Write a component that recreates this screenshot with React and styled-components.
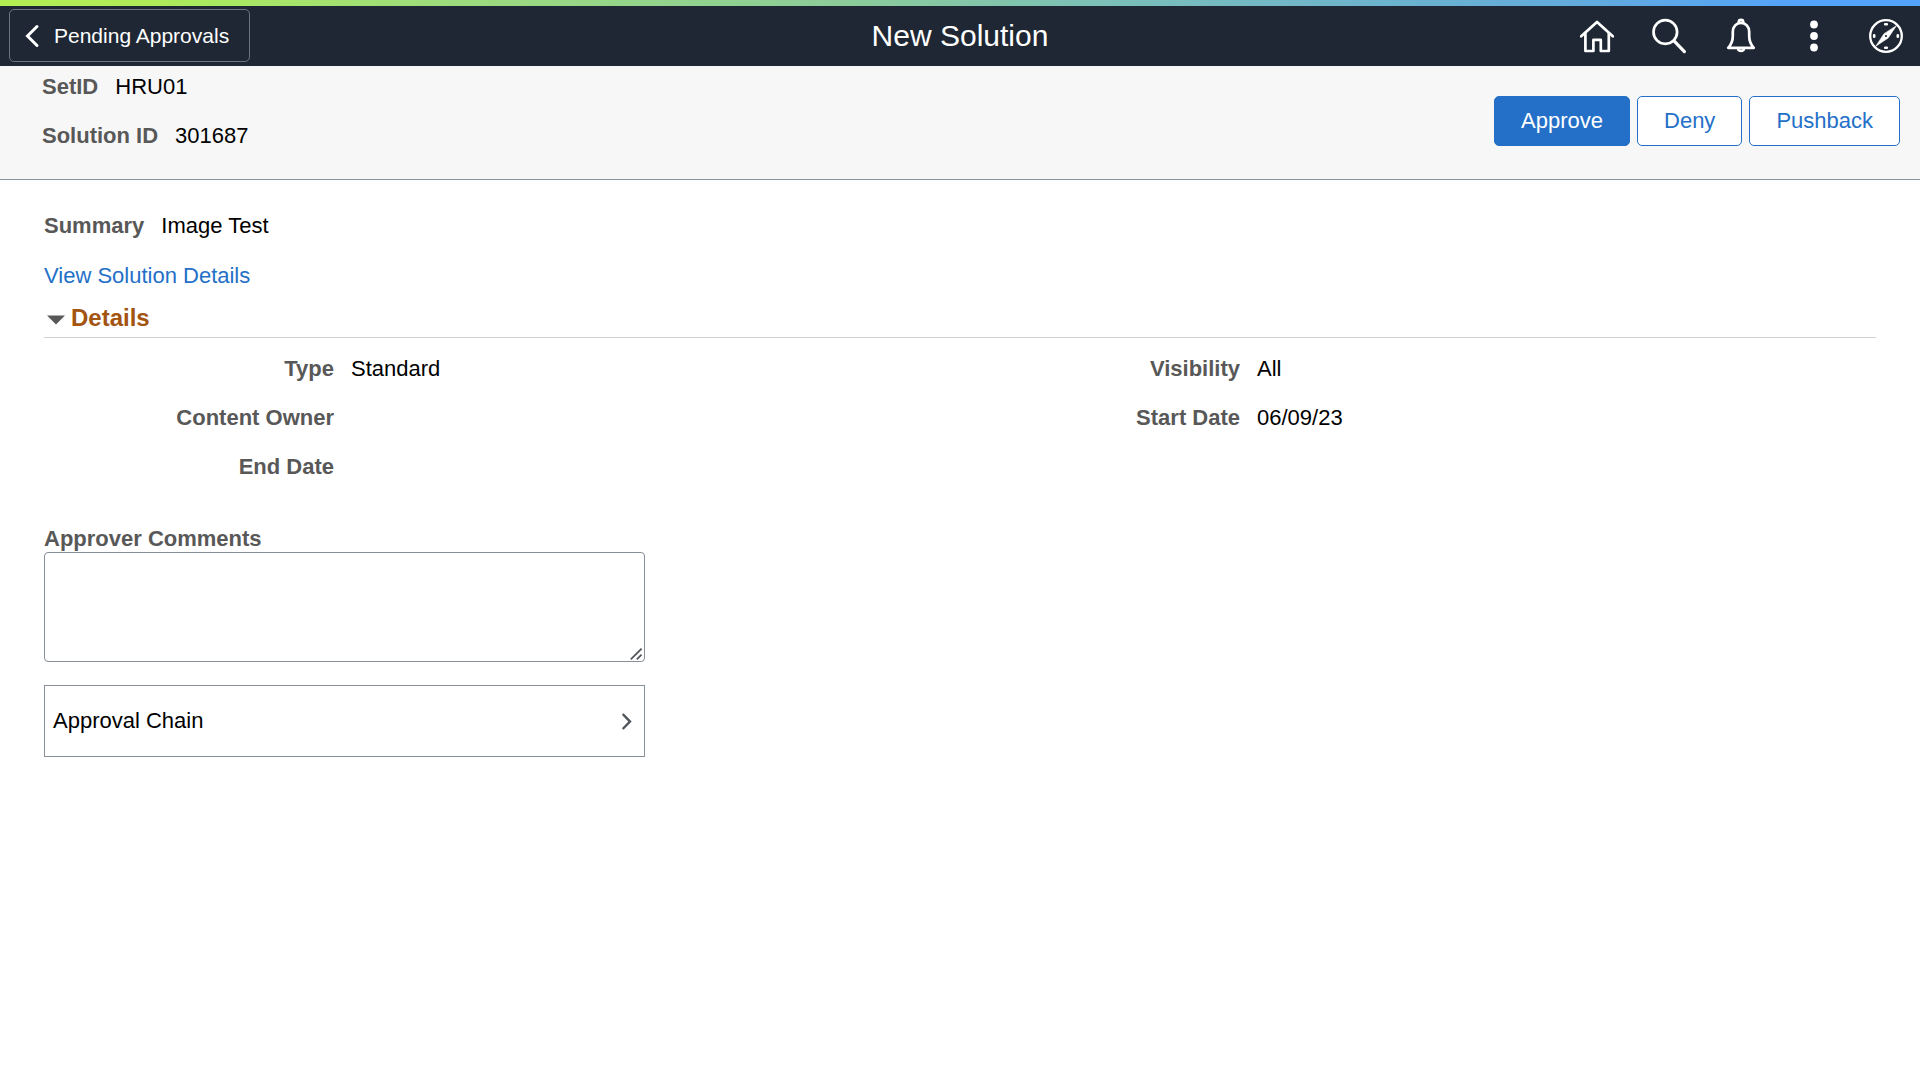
import React, { useState } from "react";
import styled, { createGlobalStyle } from "styled-components";

const GlobalStyle = createGlobalStyle`
  *, *::before, *::after { box-sizing: border-box; }
  body {
    margin: 0;
    background: #ffffff;
    color: #000000;
    font-family: "Liberation Sans", Arial, Helvetica, sans-serif;
    font-size: 22px;
    line-height: 25px;
  }
  button, textarea { font: inherit; color: inherit; }
  button { cursor: pointer; }
  svg { display: block; flex: none; }
`;

const Accent = styled.div`
  height: 6px;
  background: linear-gradient(90deg, #b3ee52 0%, #adeb59 8%, #9edd7a 22%, #8acb9b 45%, #7bbfb9 58%, #62abdc 82%, #54a3fb 94%, #54a3fb 100%);
`;

const Banner = styled.header`
  display: grid;
  grid-template-columns: 1fr auto 1fr;
  align-items: center;
  height: 60px;
  background: #1e2733;
  color: #ffffff;
`;

const BackButton = styled.button`
  display: flex;
  align-items: center;
  align-self: start;
  gap: 14px;
  justify-self: start;
  height: 53px;
  margin: 3px 0 0 9px;
  padding: 0 20px 0 14px;
  border: 1px solid #6b747e;
  border-radius: 5px;
  background: transparent;
  font-size: 21px;
`;

const Title = styled.h1`
  margin: 0;
  font-size: 30px;
  line-height: 34px;
  font-weight: 400;
`;

const Tools = styled.nav`
  display: flex;
  justify-self: end;
`;

const ToolButton = styled.button`
  display: flex;
  align-items: center;
  justify-content: center;
  width: 72px;
  height: 60px;
  padding: 0;
  border: 0;
  background: transparent;
`;

const KeyBar = styled.section`
  display: flex;
  justify-content: space-between;
  align-items: flex-start;
  padding: 8px 20px 31px 42px;
  border-bottom: 1px solid #8a949e;
  background: #f7f7f7;
`;

const Stack = styled.dl`
  display: flex;
  flex-direction: column;
  gap: 24px;
  margin: 0;
`;

const Pair = styled.div`
  display: flex;
  gap: 17px;
`;

const Term = styled.dt`
  width: ${(p) => (p.$wide ? "290px" : "auto")};
  flex: none;
  text-align: right;
  font-weight: 700;
  color: #585858;
`;

const Value = styled.dd`
  margin: 0;
`;

const Actions = styled.div`
  display: flex;
  gap: 7px;
  padding-top: 22px;
`;

const ActionButton = styled.button`
  height: 50px;
  padding: 0 26px 2px;
  border: 1px solid #2470c8;
  border-radius: 5px;
  background: ${(p) => (p.$primary ? "#2470c8" : "#ffffff")};
  color: ${(p) => (p.$primary ? "#ffffff" : "#2470c8")};
`;

const Content = styled.main`
  padding: 33px 44px;
`;

const DetailsLink = styled.a`
  display: table;
  margin-top: 25px;
  color: #2470c8;
  text-decoration: none;
`;

const SectionHeading = styled.h2`
  margin: 16px 0 18px;
  padding-bottom: 5px;
  border-bottom: 1px solid #d0d2d6;
  font-size: 24px;
  line-height: 28px;
`;

const Toggle = styled.button`
  display: flex;
  align-items: center;
  gap: 6px;
  padding: 0 0 0 3px;
  border: 0;
  background: transparent;
  font-weight: 700;
  color: #a35410;
`;

const DetailColumns = styled.div`
  display: grid;
  grid-template-columns: 1fr 1fr;
  margin-right: 20px;
`;

const ApprovalPanel = styled.section`
  display: flex;
  flex-direction: column;
  width: 601px;
  max-width: 100%;
  margin-top: 47px;
`;

const CommentLabel = styled.label`
  margin-bottom: 1px;
  font-weight: 700;
  color: #585858;
`;

const CommentField = styled.div`
  position: relative;
  display: flex;
  margin-bottom: 23px;
`;

const CommentBox = styled.textarea`
  width: 100%;
  height: 110px;
  padding: 8px;
  border: 1px solid #868e98;
  border-radius: 4px;
  background: #ffffff;
  resize: vertical;

  &::-webkit-resizer { display: none; }
`;

const Grip = styled.svg`
  position: absolute;
  right: 2px;
  bottom: 1px;
  pointer-events: none;
`;

const ChainButton = styled.button`
  display: flex;
  align-items: center;
  justify-content: space-between;
  height: 72px;
  padding: 0 12px 1px 8px;
  border: 1px solid #868e98;
  background: #ffffff;
  text-align: left;
`;

const iconProps = {
  width: 40,
  height: 40,
  viewBox: "0 0 40 40",
  fill: "none",
  stroke: "#ffffff",
  strokeWidth: 2.7,
  strokeLinecap: "round",
  strokeLinejoin: "round",
  "aria-hidden": true,
};

const HomeIcon = () => (
  <svg {...iconProps}>
    <path d="M5.2 20.3 21 6l15.8 14.3" />
    <path d="M9.4 17.5V35h8V23.9h7.4V35h8V17.5" />
  </svg>
);

const SearchIcon = () => (
  <svg {...iconProps}>
    <circle cx="17.3" cy="16" r="11.8" />
    <path d="m26 24.9 10.4 10.7" strokeWidth="3.2" />
  </svg>
);

const BellIcon = () => (
  <svg {...iconProps}>
    <path d="M8.2 31.8c3-3.2 4.6-7.4 4.6-11.8v-4.3c0-5 3.6-8.9 8.2-8.9s8.2 3.9 8.2 8.9V20c0 4.4 1.6 8.6 4.6 11.8z" />
    <path d="M18.8 5.8a2.2 2 0 0 1 4.4 0M18.2 33.4c.6 2 5 2 5.6 0" />
  </svg>
);

const MoreIcon = () => (
  <svg {...iconProps} fill="#ffffff" stroke="none">
    <circle cx="22" cy="8.5" r="3.9" />
    <circle cx="22" cy="20" r="3.9" />
    <circle cx="22" cy="31.5" r="3.9" />
  </svg>
);

const CompassIcon = () => (
  <svg {...iconProps}>
    <circle cx="22" cy="20" r="15.8" strokeWidth="2.3" />
    <path
      d="M32.4 9.8 24.2 22 11.8 30.2 19.8 18z"
      fill="#ffffff"
      strokeWidth="0.6"
    />
    <circle cx="22" cy="20" r="1.1" fill="#1e2733" stroke="none" />
    <path d="M21.2 8.2h1.6M21.2 31.8h1.6M10.2 19.2v1.6M33.8 19.2v1.6" strokeWidth="2.6" />
  </svg>
);

const tools = [
  { name: "Home", Icon: HomeIcon },
  { name: "Search", Icon: SearchIcon },
  { name: "Notifications", Icon: BellIcon },
  { name: "Actions", Icon: MoreIcon },
  { name: "NavBar", Icon: CompassIcon },
];

const keys = [
  ["SetID", "HRU01"],
  ["Solution ID", "301687"],
];

const details = [
  [
    ["Type", "Standard"],
    ["Content Owner", ""],
    ["End Date", ""],
  ],
  [
    ["Visibility", "All"],
    ["Start Date", "06/09/23"],
  ],
];

const Fields = ({ items, wide }) => (
  <Stack>
    {items.map(([term, value]) => (
      <Pair key={term}>
        <Term $wide={wide}>{term}</Term>
        <Value>{value}</Value>
      </Pair>
    ))}
  </Stack>
);

export default function App() {
  const [open, setOpen] = useState(true);

  return (
    <>
      <GlobalStyle />
      <Accent />
      <Banner>
        <BackButton type="button">
          <svg width="16" height="24" viewBox="0 0 16 24" fill="none" stroke="#ffffff" strokeWidth="3" aria-hidden="true">
            <path d="M13 2.5 3.5 12l9.5 9.5" strokeLinecap="round" />
          </svg>
          Pending Approvals
        </BackButton>
        <Title>New Solution</Title>
        <Tools>
          {tools.map(({ name, Icon }) => (
            <ToolButton key={name} type="button" aria-label={name}>
              <Icon />
            </ToolButton>
          ))}
        </Tools>
      </Banner>

      <KeyBar>
        <Fields items={keys} />
        <Actions>
          <ActionButton type="button" $primary>Approve</ActionButton>
          <ActionButton type="button">Deny</ActionButton>
          <ActionButton type="button">Pushback</ActionButton>
        </Actions>
      </KeyBar>

      <Content>
        <Fields items={[["Summary", "Image Test"]]} />
        <DetailsLink href="#details">View Solution Details</DetailsLink>

        <SectionHeading id="details">
          <Toggle type="button" aria-expanded={open} onClick={() => setOpen(!open)}>
            <svg width="18" height="18" viewBox="0 0 18 18" fill="#585858" aria-hidden="true">
              <path d={open ? "M0 6.4h18L9 15.6z" : "M5 0v18l9-9z"} />
            </svg>
            Details
          </Toggle>
        </SectionHeading>

        {open && (
          <DetailColumns>
            {details.map((items) => (
              <Fields key={items[0][0]} items={items} wide />
            ))}
          </DetailColumns>
        )}

        <ApprovalPanel>
          <CommentLabel htmlFor="comments">Approver Comments</CommentLabel>
          <CommentField>
            <CommentBox id="comments" />
            <Grip width="16" height="16" viewBox="0 0 16 16" fill="none" stroke="#50555b" strokeWidth="1.7" aria-hidden="true">
              <path d="M3.8 14.4 14.6 3.6M9.8 14.4l4.8-4.8" />
            </Grip>
          </CommentField>
          <ChainButton type="button">
            Approval Chain
            <svg width="11" height="18" viewBox="0 0 11 18" fill="none" stroke="#50555b" strokeWidth="2.4" aria-hidden="true">
              <path d="m1.7 2 7.3 7.6-7.3 7.4" />
            </svg>
          </ChainButton>
        </ApprovalPanel>
      </Content>
    </>
  );
}
